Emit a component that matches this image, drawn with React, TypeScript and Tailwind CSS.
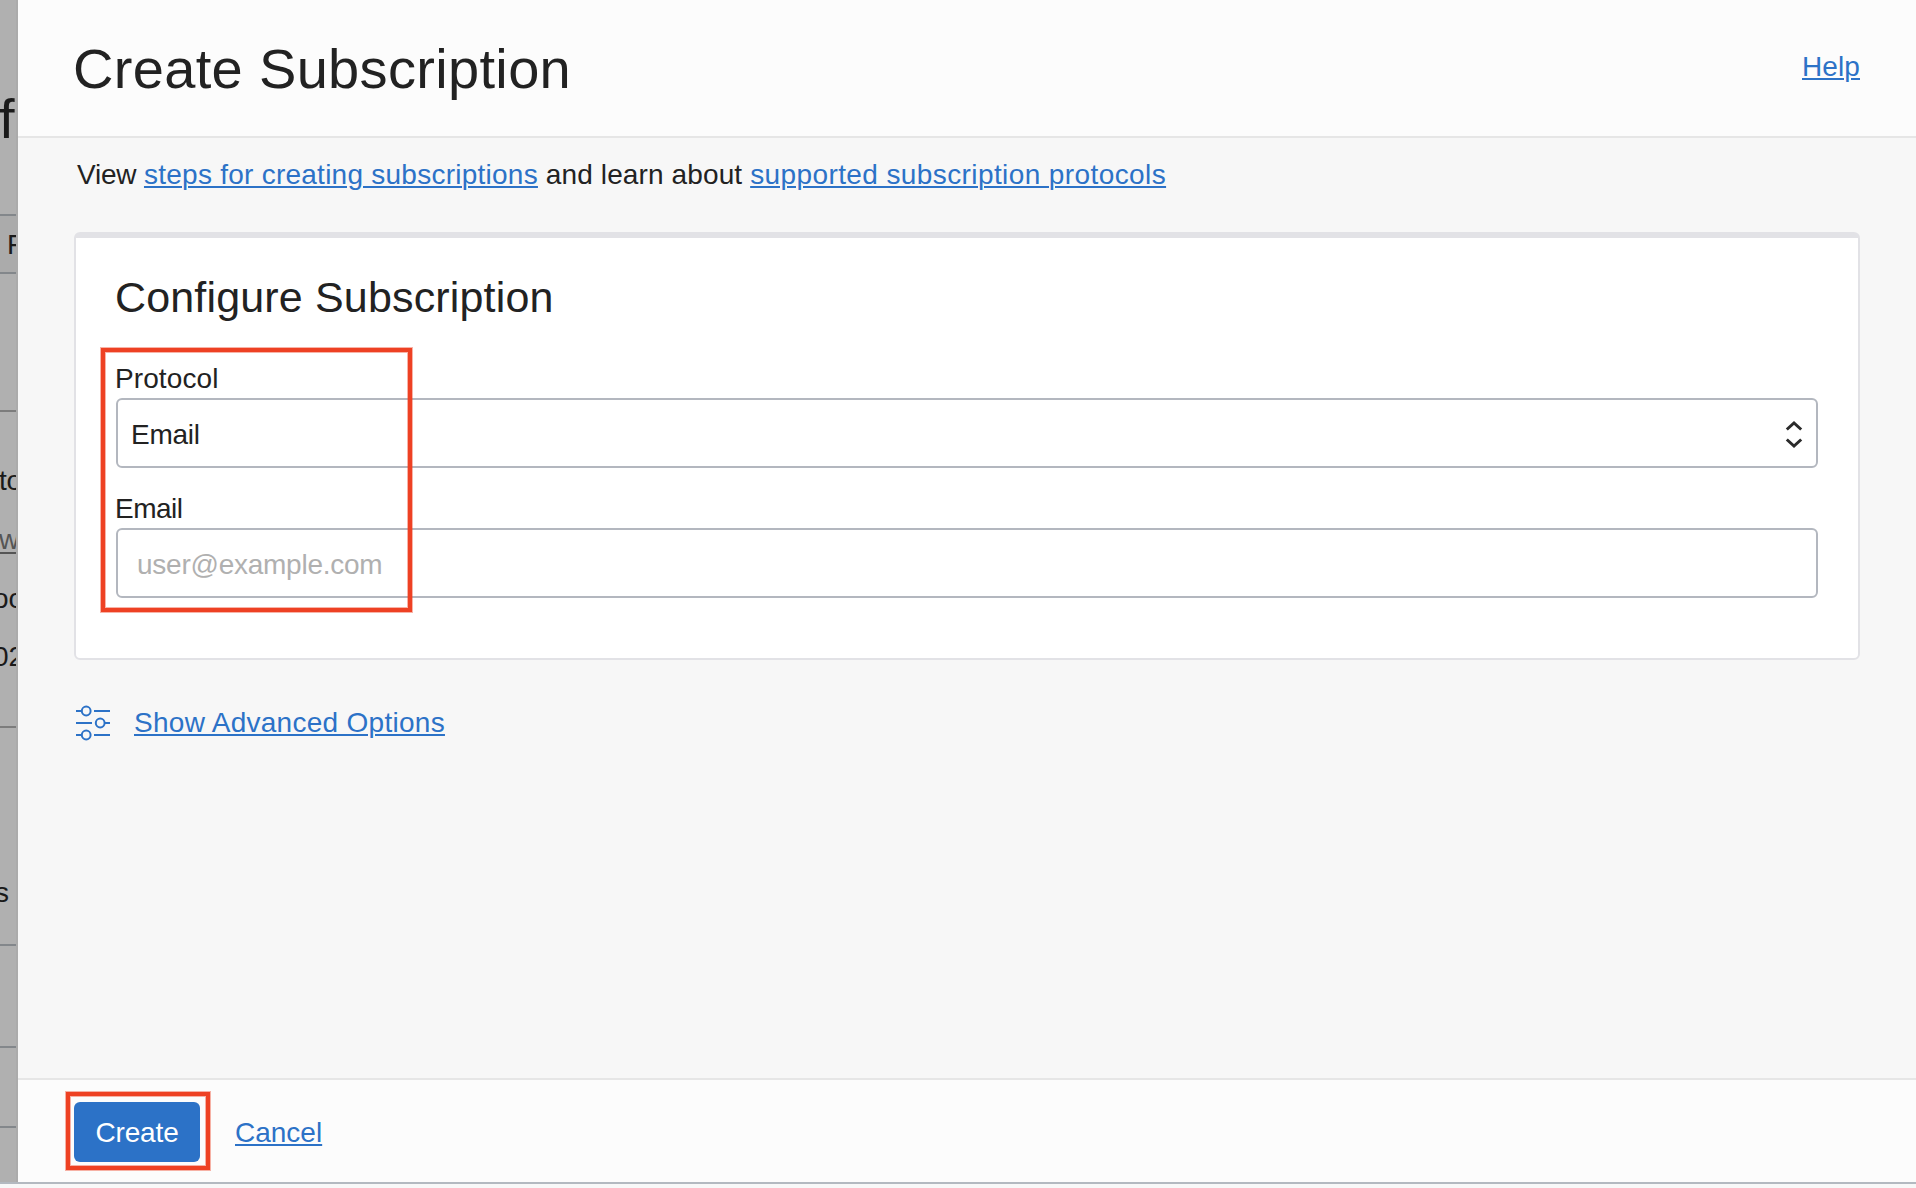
import React from "react";

const LINK =
  "text-[#2c72c7] underline decoration-[2px] underline-offset-[2px] cursor-pointer";

function Highlight({ className }: { className: string }) {
  return (
    <div
      className={`pointer-events-none absolute border-4 border-[#ee4123] shadow-[0_0_0_1px_rgba(238,65,35,0.4),inset_0_0_0_1px_rgba(238,65,35,0.4)] ${className}`}
    />
  );
}

/* The dimmed page that stays visible at the left of the panel. */
function Backdrop() {
  return (
    <aside className="w-[18px] shrink-0 border-r-2 border-[#ababab] bg-[#b0b0b0] text-[28px] leading-[32px] whitespace-nowrap text-[#1a1a1a]">
      <div className="flex h-full w-4 flex-col overflow-hidden">
        <div className="h-[214px] shrink-0 pt-[87px] text-[56px] leading-[64px]">
          <span className="-ml-px">f</span>
        </div>
        <div className="h-[60px] shrink-0 border-y-2 border-[#83878b] bg-[#ababab] pt-[13px] pl-[7px]">
          F
        </div>
        <div className="h-[138px] shrink-0 border-b-2 border-[#7c7c7c]" />
        <div className="h-[316px] shrink-0 border-b-2 border-[#7c7c7c] pt-[53px]">
          <div className="-ml-px h-[59px] tracking-[-0.4px]">to</div>
          <div className="-ml-px h-[59px] text-[#555] underline decoration-[2px] underline-offset-[3px]">
            w
          </div>
          <div className="-ml-[7px] h-[58px]">oc</div>
          <div className="-ml-[7px]">02</div>
        </div>
        <div className="h-[218px] shrink-0 border-b-2 border-[#83878b] pt-[149px]">
          <div className="-ml-[5px]">s</div>
        </div>
        <div className="h-[102px] shrink-0 border-b-2 border-[#83878b]" />
        <div className="h-[80px] shrink-0 border-b-2 border-[#83878b]" />
      </div>
    </aside>
  );
}

function UpDownIcon() {
  return (
    <svg
      width="18"
      height="32"
      viewBox="0 0 18 32"
      fill="none"
      stroke="#2b2b2b"
      strokeWidth="3"
      className="mt-[2px] shrink-0"
    >
      <path d="M1.800 11.500 9 5l7.200 6.500M1.800 21.500l7.200 6.500 7.200-6.500" />
    </svg>
  );
}

function SlidersIcon() {
  return (
    <svg
      width="34"
      height="36"
      viewBox="0 0 34 36"
      fill="none"
      stroke="#2c72c7"
      strokeWidth="2"
      className="shrink-0"
    >
      <path d="M0 6h5.500M18 6h16M0 18h16M28.500 18H34M0 30h5.500M18 30h16" />
      <circle cx="10.200" cy="6" r="4.400" />
      <circle cx="24.200" cy="18" r="4.400" />
      <circle cx="10.200" cy="30" r="4.400" />
    </svg>
  );
}

export default function App() {
  return (
    <div className="flex h-[1188px] w-[1916px] flex-col overflow-hidden bg-[#f8f8f8] font-['Liberation_Sans',Arial,sans-serif] text-[28px] leading-[32px] text-[#222]">
      <div className="flex h-[1184px] shrink-0 border-b-2 border-[#b3b9c0]">
        <Backdrop />
        <div className="flex min-w-0 flex-1 flex-col bg-[#f7f7f7]">
          <header className="flex h-[138px] shrink-0 items-start justify-between border-b-2 border-[#e6e6e6] bg-[#fcfcfc] pr-[56px] pl-[55px]">
            <h1 className="mt-[37px] text-[56px] leading-[64px] tracking-[0.33px]">
              Create Subscription
            </h1>
            <a className={`mt-[51px] tracking-[0.1px] ${LINK}`}>Help</a>
          </header>

          <main className="flex-1 pr-[56px] pl-[56px]">
            <p className="ml-[3px] pt-[21px] whitespace-pre">
              <span className="tracking-[-0.2px]">View </span>
              <a className={`tracking-[0.25px] ${LINK}`}>
                steps for creating subscriptions
              </a>
              <span className="tracking-[0.12px]"> and learn about </span>
              <a className={`tracking-[0.4px] ${LINK}`}>
                supported subscription protocols
              </a>
            </p>

            <section className="relative mt-[41px] h-[428px] rounded-[6px] border-2 border-t-[6px] border-[#e2e2e6] bg-white px-[40px] pt-[35px]">
              <h2 className="-ml-px text-[43px] leading-[48px] tracking-[0.16px]">
                Configure Subscription
              </h2>
              <label className="mt-[42px] -ml-px block tracking-[0.1px]">
                Protocol
              </label>
              <div className="mt-[3px] flex h-[70px] items-center justify-between rounded-[6px] border-2 border-[#b3b7bf] bg-white pr-[13px] pl-[13px]">
                <span className="pt-[3px] tracking-[-0.25px]">Email</span>
                <UpDownIcon />
              </div>
              <label className="mt-[25px] -ml-px block tracking-[-0.5px]">
                Email
              </label>
              <div className="mt-[3px] flex h-[70px] items-center rounded-[6px] border-2 border-[#b3b7bf] bg-white px-[19px]">
                <span className="pt-[3px] tracking-[-0.25px] text-[#b0b0b0]">
                  user@example.com
                </span>
              </div>
              <Highlight className="top-[110px] left-[25px] h-[264px] w-[311px]" />
            </section>

            <div className="mt-[45px] ml-[2px] flex items-center gap-6">
              <SlidersIcon />
              <a className={`tracking-[0.28px] ${LINK}`}>
                Show Advanced Options
              </a>
            </div>
          </main>

          <footer className="flex h-[104px] shrink-0 items-start border-t-2 border-[#e6e6e6] bg-[#fcfcfc] pt-[22px] pl-[56px]">
            <div className="relative">
              <button className="h-[60px] w-[126px] rounded-[6px] bg-[#2c72c7] pt-[2px] tracking-[-0.15px] text-white">
                Create
              </button>
              <Highlight className="-top-[10px] -left-[8px] h-[78px] w-[144px]" />
            </div>
            <a className={`mt-[15px] ml-[35px] ${LINK}`}>Cancel</a>
          </footer>
        </div>
      </div>
    </div>
  );
}
